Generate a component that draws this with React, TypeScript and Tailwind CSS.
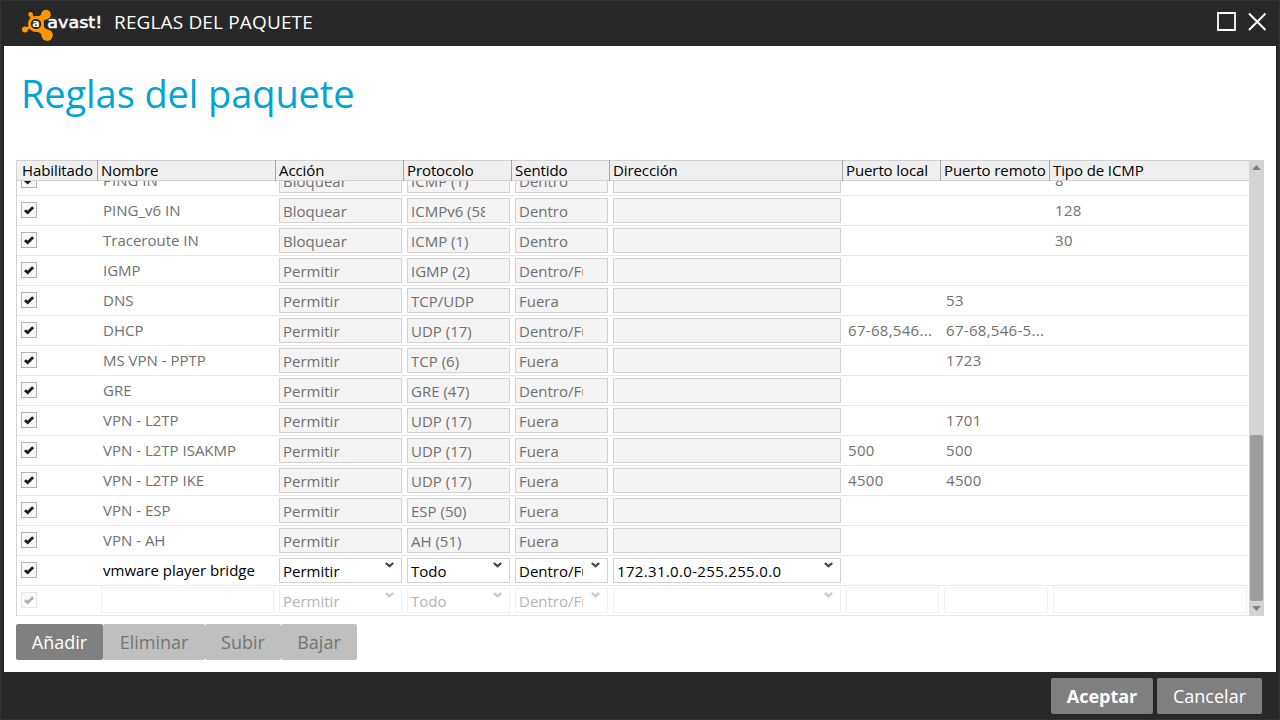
import type { ReactNode } from "react";

type Rule = {
  name: string;
  action: string;
  protocol: string;
  direction: string;
  address?: string;
  localPort?: string;
  remotePort?: string;
  icmp?: string;
  state?: "locked" | "active" | "blank";
};

const rules: Rule[] = [
  { name: "PING IN", action: "Bloquear", protocol: "ICMP (1)", direction: "Dentro", icmp: "8" },
  { name: "PING_v6 IN", action: "Bloquear", protocol: "ICMPv6 (58)", direction: "Dentro", icmp: "128" },
  { name: "Traceroute IN", action: "Bloquear", protocol: "ICMP (1)", direction: "Dentro", icmp: "30" },
  { name: "IGMP", action: "Permitir", protocol: "IGMP (2)", direction: "Dentro/Fuera" },
  { name: "DNS", action: "Permitir", protocol: "TCP/UDP", direction: "Fuera", remotePort: "53" },
  { name: "DHCP", action: "Permitir", protocol: "UDP (17)", direction: "Dentro/Fuera", localPort: "67-68,546...", remotePort: "67-68,546-5..." },
  { name: "MS VPN - PPTP", action: "Permitir", protocol: "TCP (6)", direction: "Fuera", remotePort: "1723" },
  { name: "GRE", action: "Permitir", protocol: "GRE (47)", direction: "Dentro/Fuera" },
  { name: "VPN - L2TP", action: "Permitir", protocol: "UDP (17)", direction: "Fuera", remotePort: "1701" },
  { name: "VPN - L2TP ISAKMP", action: "Permitir", protocol: "UDP (17)", direction: "Fuera", localPort: "500", remotePort: "500" },
  { name: "VPN - L2TP IKE", action: "Permitir", protocol: "UDP (17)", direction: "Fuera", localPort: "4500", remotePort: "4500" },
  { name: "VPN - ESP", action: "Permitir", protocol: "ESP (50)", direction: "Fuera" },
  { name: "VPN - AH", action: "Permitir", protocol: "AH (51)", direction: "Fuera" },
  { name: "vmware player bridge", action: "Permitir", protocol: "Todo", direction: "Dentro/Fuera", address: "172.31.0.0-255.255.0.0", state: "active" },
  { name: "", action: "Permitir", protocol: "Todo", direction: "Dentro/Fuera", state: "blank" },
];

const columns = [
  "Habilitado",
  "Nombre",
  "Acción",
  "Protocolo",
  "Sentido",
  "Dirección",
  "Puerto local",
  "Puerto remoto",
  "Tipo de ICMP",
];

const gridCols = "grid grid-cols-[81px_178px_128px_108px_98px_233px_98px_109px_199px]";

function Logo() {
  return (
    <svg width="84" height="36" viewBox="20 8 84 36" className="block shrink-0">
      <g fill="#ff9800" stroke="#ff9800">
        <circle cx="36" cy="24" r="8" stroke="none" />
        <circle cx="46" cy="14.6" r="4.8" stroke="none" />
        <circle cx="30.6" cy="14.4" r="2.3" stroke="none" />
        <circle cx="24.9" cy="29.6" r="3" stroke="none" />
        <circle cx="47.2" cy="35.2" r="5.6" stroke="none" />
        <path d="M31 15.5l3 5M26 29l5-2.5" strokeWidth="3" />
        <path d="M36 16.200Q41 17 41.800 12.500L48 19Q43 19 43.400 24Q43.500 29 49 30L41.800 37Q42 32 36 31.800Z" stroke="none" />
      </g>
      <circle cx="36" cy="23.900" r="5.2" fill="#282828" />
      <text x="36" y="27" textAnchor="middle" fontFamily="DejaVu Sans" fontWeight="700" fontSize="11" fill="#fff">a</text>
      <text x="47.300" y="27.900" textLength="55" lengthAdjust="spacingAndGlyphs" fontFamily="DejaVu Sans" fontWeight="400" fontSize="15.500" fill="#fff" stroke="#fff" strokeWidth="0.500">avast!</text>
    </svg>
  );
}

function Check({ faded }: { faded: boolean }) {
  return (
    <span className={`mt-1.5 ml-1 flex size-4 items-center justify-center border border-[#b4b4b4] bg-[#f8f8f8] ${faded ? "opacity-35" : ""}`}>
      <svg width="10" height="9" viewBox="0 0 10 9">
        <path d="M0.900 4.200L3.700 6.600L9.100 1.200" fill="none" stroke="#1c1c1c" strokeWidth="2.800" />
      </svg>
    </span>
  );
}

function Field({ text, state }: { text?: string; state: string }) {
  const look =
    state === "locked"
      ? "border-[#d2d2d2] bg-[#f4f4f4] text-[#707070]"
      : state === "active"
        ? "border-[#d2d2d2] bg-white text-black"
        : "border-[#f0f0f0] bg-white text-[#b4b4b4]";
  return (
    <div className={`mt-0.5 mr-0.5 ml-[3px] flex h-[25px] border ${look}`}>
      <div className="ml-[3px] h-[23px] min-w-0 flex-1 overflow-hidden whitespace-nowrap leading-[25px]">{text}</div>
      <div className="flex w-6 justify-center pt-[3px]">
        {state !== "locked" && (
          <svg width="9" height="6" viewBox="0 0 9 6" className={state === "blank" ? "opacity-30" : ""}>
            <path d="M0.800 1L4.500 4.200L8.200 1" fill="none" stroke="#484848" strokeWidth="2.200" />
          </svg>
        )}
      </div>
    </div>
  );
}

function TextCell({ text, blank, digits }: { text?: string; blank: boolean; digits?: boolean }) {
  if (blank) return <div className="mt-px mr-0.5 ml-[3px] h-[26px] border border-[#f0f0f0] bg-white" />;
  return <div className={`truncate pl-[5px] leading-[29px] ${digits ? "tracking-[0.3px]" : ""}`}>{text}</div>;
}

function Row({ rule }: { rule: Rule }) {
  const state = rule.state ?? "locked";
  const blank = state === "blank";
  return (
    <div className={`${gridCols} h-[30px] shrink-0 border-b border-[#e8e8e8] ${state === "active" ? "text-black" : "text-[#707070]"}`}>
      <Check faded={blank} />
      <TextCell text={rule.name} blank={blank} />
      <Field text={rule.action} state={state} />
      <Field text={rule.protocol} state={state} />
      <Field text={rule.direction} state={state} />
      <div className="grid tracking-[0.33px]">
        <Field text={rule.address} state={state} />
      </div>
      <TextCell text={rule.localPort} blank={blank} digits />
      <TextCell text={rule.remotePort} blank={blank} digits />
      <TextCell text={rule.icmp} blank={blank} digits />
    </div>
  );
}

function Button({ className, children }: { className: string; children: ReactNode }) {
  return <button className={`flex h-9 items-center justify-center rounded-[2px] text-[18px] ${className}`}>{children}</button>;
}

export default function App() {
  return (
    <div className="flex h-[720px] w-[1280px] flex-col overflow-hidden border border-[#353233] bg-[#282828] px-[3px] font-['Open_Sans',sans-serif]">
      <header className="flex h-[45px] shrink-0 items-start">
        <div className="mt-[7px] ml-4">
          <Logo />
        </div>
        <h1 className="mt-[6px] ml-[10px] text-[19px] leading-[30px] tracking-[0.15px] text-white">REGLAS DEL PAQUETE</h1>
        <div className="mt-[11px] mr-2 ml-auto flex gap-3">
          <svg width="19" height="20" viewBox="0 0 19 20">
            <path d="M1 1H18V18H1Z" fill="none" stroke="#fff" strokeWidth="1.800" />
          </svg>
          <svg width="20" height="20" viewBox="0 0 20 20">
            <path d="M1 1.500L17.500 18M17.500 1.500L1 18" fill="none" stroke="#fff" strokeWidth="2" />
          </svg>
        </div>
      </header>

      <main className="flex h-[626px] shrink-0 flex-col bg-white px-3">
        <h2 className="h-[114px] pt-[19px] pl-[5px] text-[38px] leading-[56px] tracking-[-0.1px] text-[#00a5d3]">Reglas del paquete</h2>

        <div className="flex h-[456px] text-[15px]">
          <div className="flex w-[1233px] flex-col border-l border-[#d2d2d2]">
            <div className={`${gridCols} h-[21px] shrink-0 border-y border-[#d2d2d2] bg-[#efefef] tracking-[-0.1px] text-black`}>
              {columns.map((label, i) => (
                <div
                  key={label}
                  className={`-my-px h-[21px] whitespace-nowrap leading-[21px] ${i === 0 ? "pl-[5px]" : "pl-[3px]"} ${i < columns.length - 1 ? "border-r border-[#a5a5a5]" : ""}`}
                >
                  {label}
                </div>
              ))}
            </div>
            <div className="flex h-[435px] flex-col justify-end overflow-hidden">
              {rules.map((rule, i) => (
                <Row key={i} rule={rule} />
              ))}
            </div>
          </div>
          <div className="flex w-[15px] flex-col items-center bg-[#d4d4d4]">
            <svg width="9" height="5" viewBox="0 0 9 5" className="mt-[5px]">
              <path d="M0 5L4.500 0L9 5Z" fill="#808080" />
            </svg>
            <div className="mt-auto h-[166px] w-[13px] rounded-[2px] bg-[#9d9d9d]" />
            <svg width="9" height="5" viewBox="0 0 9 5" className="mt-[5px] mb-[5px]">
              <path d="M0 0L4.500 5L9 0Z" fill="#808080" />
            </svg>
          </div>
        </div>

        <div className="mt-2 flex">
          <Button className="w-[87px] bg-[#808080] text-white">Añadir</Button>
          <Button className="w-[102px] bg-[#bfbfbf] text-[#747474]">Eliminar</Button>
          <Button className="w-[76px] bg-[#bfbfbf] text-[#747474]">Subir</Button>
          <Button className="w-[76px] bg-[#bfbfbf] text-[#747474]">Bajar</Button>
        </div>
      </main>

      <footer className="flex justify-end gap-1 pt-1.5 pr-[14px]">
        <Button className="w-[102px] bg-[#808080] font-bold text-white">Aceptar</Button>
        <Button className="w-[105px] bg-[#808080] text-white">Cancelar</Button>
      </footer>
    </div>
  );
}
